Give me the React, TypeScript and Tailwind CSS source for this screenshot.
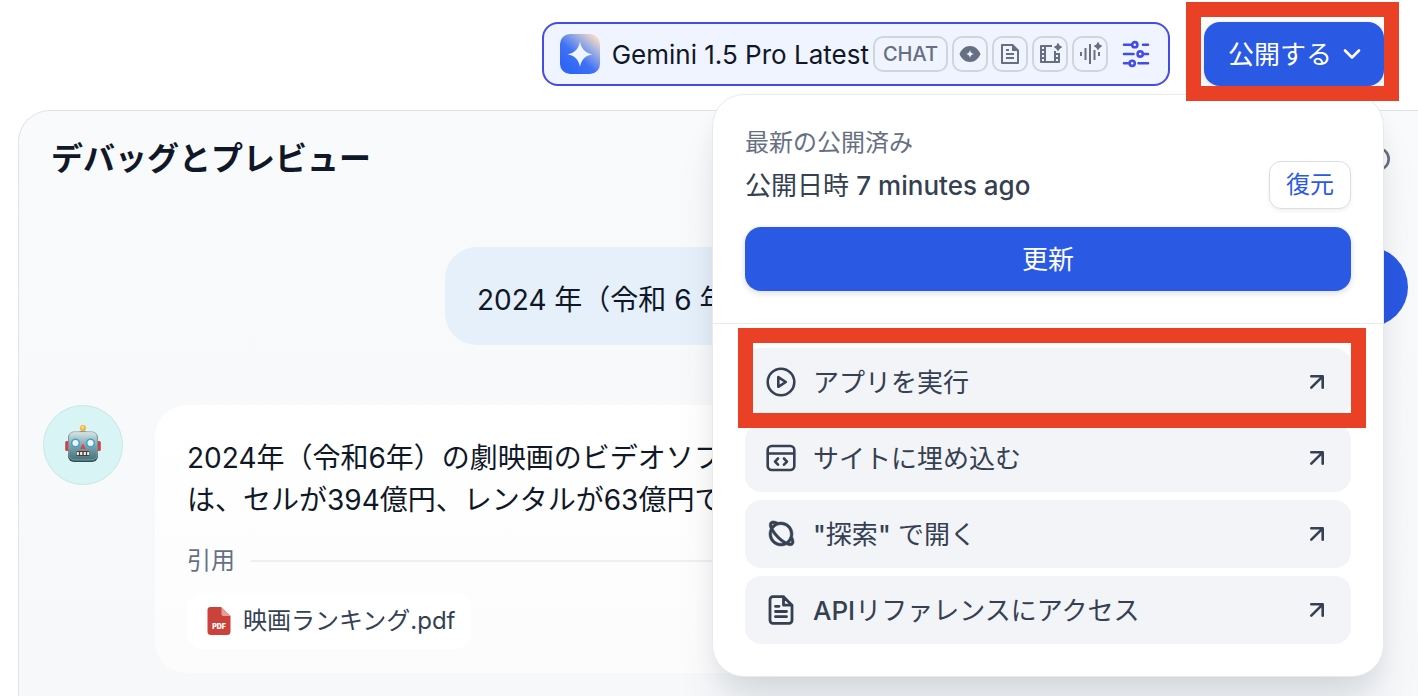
import type { ReactNode } from "react";
import { RiFileTextLine, RiFilmAiLine, RiPlanetLine, RiVoiceAiFill } from "react-icons/ri";

const line = {
  fill: "none",
  stroke: "currentColor",
  strokeLinecap: "round" as const,
  strokeLinejoin: "round" as const,
};

function GeminiLogo() {
  return (
    <svg className="size-10 shrink-0" viewBox="0 0 40 40" aria-hidden="true">
      <defs>
        <linearGradient id="gem" x1="8" y1="34" x2="36" y2="2" gradientUnits="userSpaceOnUse">
          <stop offset="0" stopColor="#2f66f6" />
          <stop offset="0.35" stopColor="#3f72f4" />
          <stop offset="0.65" stopColor="#8ea6e6" />
          <stop offset="1" stopColor="#fbdcc6" />
        </linearGradient>
      </defs>
      <rect width="40" height="40" rx="10" fill="url(#gem)" />
      <path d="M20 7.5C21.2 14.5 25 19 32.5 20.3C25 21.6 21.2 26 20 33C18.800 26 15 21.600 7.500 20.300C15 19 18.800 14.500 20 7.500Z" fill="#eff4ff" />
    </svg>
  );
}

function EyeIcon() {
  return (
    <svg className="size-6" viewBox="0 0 24 24" fill="currentColor" aria-hidden="true">
      <path
        fillRule="evenodd"
        d="M12 4C17 4 20.500 7.500 22.500 12C20.500 16.500 17 20 12 20S3.500 16.500 1.500 12C3.500 7.500 7 4 12 4ZM12 8C11.600 10.500 10.500 11.600 8 12C10.500 12.400 11.600 13.500 12 16C12.400 13.500 13.500 12.400 16 12C13.500 11.600 12.400 10.500 12 8Z"
      />
    </svg>
  );
}

function SlidersIcon() {
  return (
    <svg className="size-8 text-[#444ce7]" viewBox="0 0 32 32" strokeWidth="2.600" {...line} aria-hidden="true">
      <path d="M4 6.700H11M23 6.700H28M4 16H13.500M23.500 16H28M4 25.300H9M18.500 25.300H28" />
      <circle cx="14.800" cy="6.700" r="2.600" />
      <circle cx="20.200" cy="16" r="2.600" />
      <circle cx="12.200" cy="25.300" r="2.600" />
    </svg>
  );
}

function PlayIcon() {
  return (
    <svg className="size-8" viewBox="0 0 32 32" strokeWidth="2.600" {...line} aria-hidden="true">
      <circle cx="16" cy="16" r="13.300" />
      <path d="M13.300 11.200V20.800L20.800 16Z" />
    </svg>
  );
}

function EmbedIcon() {
  return (
    <svg className="size-8" viewBox="0 0 32 32" strokeWidth="2.600" {...line} aria-hidden="true">
      <rect x="2.700" y="4" width="26.600" height="24" rx="4" />
      <path d="M3 11.500H29M13 16.500L10 19.600L13 22.700M19 16.500L22 19.600L19 22.700" />
    </svg>
  );
}

function DocIcon() {
  return (
    <svg className="size-8" viewBox="0 0 32 32" strokeWidth="2.800" {...line} aria-hidden="true">
      <path d="M18.500 2.700H8A3 3 0 0 0 5 5.700V26.300A3 3 0 0 0 8 29.300H24A3 3 0 0 0 27 26.300V11.200ZM18.500 2.700V11.200H27M10.500 12.300H14M10.500 17.500H21.500M10.500 22.700H21.500" />
    </svg>
  );
}

function ArrowIcon() {
  return (
    <svg className="size-7 shrink-0" viewBox="0 0 28 28" strokeWidth="2.600" {...line} aria-hidden="true">
      <path d="M8.300 19.700L19.700 8.300M8.300 8.300H19.700V19.700" />
    </svg>
  );
}

function RobotIcon() {
  return (
    <svg className="size-10" viewBox="0 0 40 40" aria-hidden="true">
      <defs>
        <linearGradient id="head" x1="0" y1="0" x2="0" y2="1">
          <stop offset="0" stopColor="#d9e6e8" />
          <stop offset="0.5" stopColor="#7fa3ac" />
          <stop offset="1" stopColor="#3f7480" />
        </linearGradient>
      </defs>
      <rect x="2.200" y="16" width="5" height="10" rx="1.500" fill="#c9444a" />
      <rect x="32.800" y="16" width="5" height="10" rx="1.500" fill="#c9444a" />
      <path d="M15.500 8.500C16 4.500 24 4.500 24.500 8.500Z" fill="#5a4a94" />
      <circle cx="20" cy="3" r="3.100" fill="#f4b63c" />
      <circle cx="19.600" cy="2.200" r="1.300" fill="#fbe08a" />
      <rect x="5" y="7" width="30" height="30" rx="6" fill="#2f4e57" />
      <rect x="5.700" y="6.700" width="28.600" height="28.300" rx="5.500" fill="url(#head)" stroke="#9aa9a9" strokeWidth="0.800" />
      <circle cx="12.500" cy="18" r="4.600" fill="#3fa3d8" />
      <circle cx="12.500" cy="18" r="3" fill="#f4fcff" />
      <circle cx="27.500" cy="18" r="4.600" fill="#3fa3d8" />
      <circle cx="27.500" cy="18" r="3" fill="#f4fcff" />
      <path d="M20 18.500L22.800 24H17.200Z" fill="#d9434a" />
      <rect x="13" y="26" width="14" height="5" rx="2" fill="#4a3b35" />
      <path d="M14.800 27V30M18.200 27V30M21.800 27V30M25.200 27V30" stroke="#f3ecdc" strokeWidth="2.200" />
    </svg>
  );
}

function PdfIcon() {
  return (
    <svg className="size-8 shrink-0" viewBox="0 0 32 32" aria-hidden="true">
      <path d="M7.500 2H18L27.500 11V26.500A3.500 3.500 0 0 1 24 30H8A3.500 3.500 0 0 1 4.500 26.500V5A3 3 0 0 1 7.500 2Z" fill="#cb423b" />
      <path d="M18.500 2L27.500 11H20.500A2 2 0 0 1 18.500 9Z" fill="#e79e9a" />
      <text x="16" y="23.500" textAnchor="middle" fontFamily="Inter, sans-serif" fontSize="7" fontWeight="900" fill="#fff">
        PDF
      </text>
    </svg>
  );
}

function Badge({ label, children }: { label: string; children: ReactNode }) {
  return (
    <span aria-label={label} className="flex size-9 items-center justify-center rounded-[10px] border-2 border-[#d0d5dd] text-[#676f83]">
      {children}
    </span>
  );
}

function Highlight({ className }: { className: string }) {
  return <span aria-hidden="true" className={`pointer-events-none absolute z-20 border-[15px] border-[#ea4025] ${className}`} />;
}

function MenuRow({ icon, children, highlighted }: { icon: ReactNode; children: ReactNode; highlighted?: boolean }) {
  return (
    <li className="relative">
      <a href="#" className="flex h-[68px] items-center gap-4 rounded-2xl bg-[#f2f4f7] px-5 text-[26px] text-[#354052]">
        {icon}
        <span className="grow">{children}</span>
        <ArrowIcon />
      </a>
      {highlighted && <Highlight className="-top-5 -right-[15px] -bottom-3 -left-[7px]" />}
    </li>
  );
}

function PublishMenu() {
  return (
    <div className="absolute top-full right-0 z-10 mt-2 w-[672px] rounded-[32px] border border-[#e9eaec] bg-white shadow-[0_40px_48px_-8px_rgba(16,24,40,0.09),0_12px_24px_-4px_rgba(16,24,40,0.07)]">
      <div className="border-b border-[#e9eaec] p-8">
        <p className="text-[24px] leading-8 text-[#676f83]">最新の公開済み</p>
        <div className="mt-0.5 flex items-center justify-between">
          <p className="text-[26px] text-[#354052]">
            公開日時 <span className="font-medium">7 minutes ago</span>
          </p>
          <button className="h-12 rounded-xl border border-[#dcdee3] bg-white px-4 text-[24px] text-[#2a59e4] shadow-[0_2px_4px_rgba(16,24,40,0.06)]">
            復元
          </button>
        </div>
        <button className="mt-[18px] h-16 w-full rounded-2xl bg-[#2a59e4] text-[26px] text-white shadow-[0_2px_6px_rgba(16,24,40,0.16)]">
          更新
        </button>
      </div>
      <ul className="flex flex-col gap-2 px-8 pt-6 pb-8">
        <MenuRow icon={<PlayIcon />} highlighted>
          アプリを実行
        </MenuRow>
        <MenuRow icon={<EmbedIcon />}>サイトに埋め込む</MenuRow>
        <MenuRow icon={<RiPlanetLine className="size-8 stroke-current stroke-[0.4]" aria-hidden="true" />}>
          <span className="font-medium">"</span>探索<span className="font-medium">"</span> で開く
        </MenuRow>
        <MenuRow icon={<DocIcon />}>
          <span className="font-medium">API</span>リファレンスにアクセス
        </MenuRow>
      </ul>
    </div>
  );
}

export default function App() {
  return (
    <div className="flex min-h-screen flex-col overflow-hidden bg-white font-['Inter','Noto_Sans_CJK_JP',sans-serif] text-[#101828]">
      <header className="flex items-center justify-end gap-[34px] pt-[22px] pr-[34px] pb-6">
        <button className="flex h-16 items-center rounded-2xl border-2 border-[#444ce7] bg-[#eff4ff] px-4">
          <GeminiLogo />
          <span className="ml-3 text-[26px]">Gemini 1.5 Pro Latest</span>
          <span className="ml-1 flex gap-1">
            <span className="flex h-9 items-center rounded-[10px] border-2 border-[#d0d5dd] px-2 text-[20px] font-medium text-[#676f83]">
              CHAT
            </span>
            <Badge label="Vision">
              <EyeIcon />
            </Badge>
            <Badge label="Document">
              <RiFileTextLine className="size-6" />
            </Badge>
            <Badge label="Video">
              <RiFilmAiLine className="size-6" />
            </Badge>
            <Badge label="Audio">
              <RiVoiceAiFill className="size-6" />
            </Badge>
          </span>
          <span className="ml-3">
            <SlidersIcon />
          </span>
        </button>
        <div className="relative">
          <button className="flex h-16 items-center gap-1.5 rounded-2xl bg-[#2a59e4] pr-[18px] pl-6 text-[26px] text-white shadow-[0_2px_6px_rgba(16,24,40,0.16)]">
            公開する
            <svg className="size-7" viewBox="0 0 28 28" strokeWidth="2.600" {...line} aria-hidden="true">
              <path d="M7 10.500L14 17.500L21 10.500" />
            </svg>
          </button>
          <Highlight className="-top-5 -right-[15px] -bottom-[15px] -left-[18px]" />
          <PublishMenu />
        </div>
      </header>

      <main className="ml-[18px] grow rounded-tl-[32px] border-t border-l border-[#dfe4ea] bg-linear-to-b from-[#f9fafb] to-[#f6f8fa] pr-[10px] pl-6">
        <div className="flex h-24 items-center justify-between pr-[18px] pl-2">
          <h1 className="text-[32px] font-bold">デバッグとプレビュー</h1>
          <svg className="size-6 text-[#676f83]" viewBox="0 0 24 24" strokeWidth="2.600" {...line} aria-hidden="true">
            <circle cx="12" cy="12" r="10.700" />
          </svg>
        </div>

        <div className="flex gap-8 pt-10">
          <p className="ml-auto max-w-[851px] grow rounded-[32px] bg-[#e6f0fa] px-8 pt-8 pb-6 text-[28px] leading-[42px]">
            2024 年（令和 6 年
          </p>
          <span className="size-20 shrink-0 rounded-full bg-[#2a59e4]" />
        </div>

        <div className="mt-[60px] flex gap-8 pr-28">
          <span className="flex size-20 shrink-0 items-center justify-center rounded-full border border-[#c9e6e6] bg-[#d9f4f5]">
            <RobotIcon />
          </span>
          <article className="grow rounded-[32px] bg-linear-to-b from-white to-[#fcfcfd] px-8 pt-8 pb-6">
            <p className="text-[28px] leading-[42px]">
              2024年（令和6年）の劇映画のビデオソフ
              <br />
              は、セルが394億円、レンタルが63億円で
            </p>
            <div className="mt-[22px] flex items-center gap-4">
              <span className="text-[24px] leading-9 text-[#676f83]">引用</span>
              <span className="h-0.5 grow bg-[#eeeff1]" />
            </div>
            <a href="#" className="mt-[14px] inline-flex h-14 items-center gap-2 rounded-2xl bg-white px-4 text-[24px] text-[#354052]">
              <PdfIcon />
              映画ランキング.pdf
            </a>
          </article>
        </div>
      </main>
    </div>
  );
}
